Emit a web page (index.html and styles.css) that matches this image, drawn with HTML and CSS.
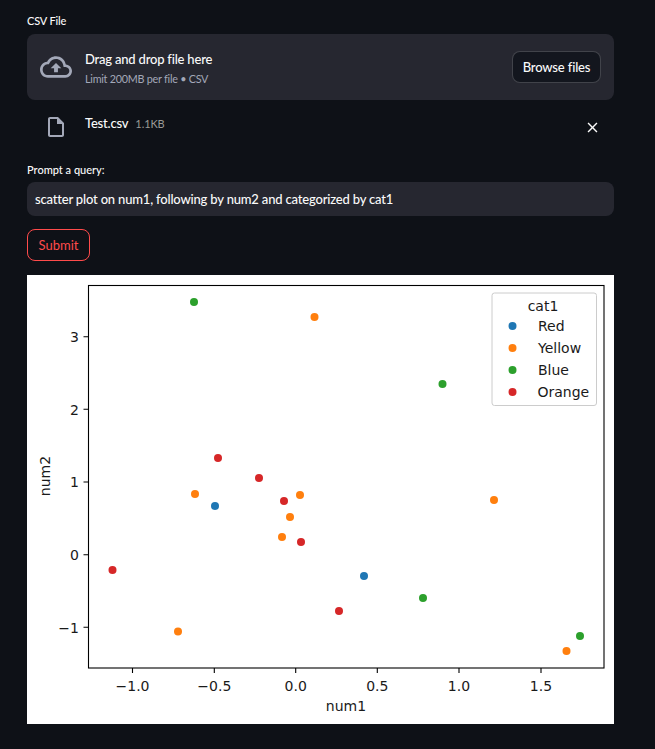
FILE: index.html
```html
<!DOCTYPE html>
<html lang="en">
<head>
<meta charset="utf-8">
<title>CSV query</title>
<link rel="stylesheet" href="styles.css">
</head>
<body>
<main class="app">
  <label class="field-label label-csv">CSV File</label>
  <section class="dropzone">
    <svg class="icon-cloud" viewBox="0 0 24 24"><path d="M19.35 10.04C18.67 6.59 15.64 4 12 4 9.11 4 6.6 5.64 5.35 8.04 2.34 8.36 0 10.91 0 14c0 3.31 2.69 6 6 6h13c2.76 0 5-2.24 5-5 0-2.64-2.05-4.78-4.65-4.96zM19 18H6c-2.21 0-4-1.79-4-4 0-2.05 1.53-3.76 3.56-3.97l1.07-.11.5-.95C8.08 7.14 9.94 6 12 6c2.62 0 4.88 1.86 5.39 4.43l.3 1.5 1.53.11c1.56.1 2.78 1.41 2.78 2.96 0 1.65-1.35 3-3 3zM8 13h2.55v3h2.9v-3H16l-4-4z"/></svg>
    <div class="drop-text">
      <div class="drop-title">Drag and drop file here</div>
      <div class="drop-sub">Limit 200MB per file • CSV</div>
    </div>
    <button class="browse">Browse files</button>
  </section>
  <section class="file-row">
    <svg class="icon-file" viewBox="0 0 24 24"><path d="M14 2H6c-1.1 0-1.99.9-1.99 2L4 20c0 1.1.89 2 1.99 2H18c1.1 0 2-.9 2-2V8l-6-6zM6 20V4h7v5h5v11H6z"/></svg>
    <span class="file-name">Test.csv</span>
    <span class="file-size">1.1KB</span>
    <svg class="icon-close" viewBox="0 0 24 24"><path d="M19 6.41L17.59 5 12 10.59 6.41 5 5 6.41 10.59 12 5 17.59 6.41 19 12 13.41 17.59 19 19 17.59 13.41 12z"/></svg>
  </section>
  <label class="field-label label-query">Prompt a query:</label>
  <div class="query-input">scatter plot on num1, following by num2 and categorized by cat1</div>
  <button class="submit">Submit</button>
  <figure class="plot">
    <svg class="chart" width="587" height="449" viewBox="0 0 587 449">
      <rect class="axes" x="61.5" y="10.5" width="515.5" height="382.5"/>
      <g class="ticks">
        <path d="M105.5 393v5M187.3 393v5M268.7 393v5M350.3 393v5M432 393v5M514 393v5"/>
        <path d="M61.5 61.7h-5M61.5 134.3h-5M61.5 207h-5M61.5 279.7h-5M61.5 352.3h-5"/>
      </g>
      <g class="tick-x">
        <text x="105.5" y="416">−1.0</text>
        <text x="187.3" y="416">−0.5</text>
        <text x="268.7" y="416">0.0</text>
        <text x="350.3" y="416">0.5</text>
        <text x="432" y="416">1.0</text>
        <text x="514" y="416">1.5</text>
      </g>
      <g class="tick-y">
        <text x="52" y="67">3</text>
        <text x="52" y="139.5">2</text>
        <text x="52" y="212">1</text>
        <text x="52" y="285">0</text>
        <text x="52" y="357.5">−1</text>
      </g>
      <text class="axis-label" x="319" y="436">num1</text>
      <text class="axis-label" transform="translate(23 201) rotate(-90)">num2</text>
      <g class="s-green">
        <circle cx="167" cy="27" r="4"/><circle cx="415.500" cy="109" r="4"/><circle cx="396" cy="323" r="4"/><circle cx="553" cy="361" r="4"/>
      </g>
      <g class="s-orange">
        <circle cx="287.500" cy="42" r="4"/><circle cx="168" cy="219" r="4"/><circle cx="273" cy="220" r="4"/><circle cx="467" cy="225" r="4"/><circle cx="263" cy="242" r="4"/><circle cx="255" cy="262" r="4"/><circle cx="151" cy="356.500" r="4"/><circle cx="539.500" cy="376" r="4"/>
      </g>
      <g class="s-red">
        <circle cx="191" cy="183" r="4"/><circle cx="232" cy="203" r="4"/><circle cx="257" cy="226" r="4"/><circle cx="274" cy="267" r="4"/><circle cx="85.500" cy="295" r="4"/><circle cx="312" cy="336" r="4"/>
      </g>
      <g class="s-blue">
        <circle cx="188" cy="231" r="4"/><circle cx="337" cy="301" r="4"/>
      </g>
      <rect class="legend" x="465" y="18" width="104.500" height="112.500" rx="2.500"/>
      <text class="legend-title" x="516" y="35.500">cat1</text>
      <circle class="m-blue" cx="485.500" cy="51" r="4"/>
      <circle class="m-orange" cx="485.500" cy="73" r="4"/>
      <circle class="m-green" cx="485.500" cy="95" r="4"/>
      <circle class="m-red" cx="485.500" cy="117" r="4"/>
      <text class="legend-text" x="511" y="56">Red</text>
      <text class="legend-text" x="511" y="78">Yellow</text>
      <text class="legend-text" x="511" y="100">Blue</text>
      <text class="legend-text" x="510.500" y="122">Orange</text>
    </svg>
  </figure>
</main>
</body>
</html>
```
FILE: styles.css
```css
* { box-sizing: border-box; }
html, body { margin: 0; padding: 0; }
body {
  background: #0e1117;
  color: #fafafa;
  font-family: "Lato", "Noto Sans", sans-serif;
  width: 655px;
  height: 749px;
  overflow: hidden;
}
.app {
  width: 587px;
  margin-left: 27px;
  display: flex;
  flex-direction: column;
  padding-top: 14px;
}
.field-label {
  display: block;
  font-size: 11px;
  line-height: 14px;
  font-weight: 500;
  color: #fafafa;
}
.label-csv { margin-bottom: 6px; letter-spacing: -0.15px; }
.dropzone {
  height: 66px;
  background: #262730;
  border-radius: 8px;
  display: flex;
  align-items: center;
  padding: 0 13px;
}
.icon-cloud { width: 32px; height: 32px; fill: #a3a8b8; flex: none; }
.drop-text { margin-left: 13px; flex: 1; margin-top: 3px; }
.drop-title { font-size: 13px; line-height: 20px; letter-spacing: -0.2px; font-weight: 500; color: #fafafa; }
.drop-sub { font-size: 10.800px; line-height: 20px; letter-spacing: -0.25px; color: #a3a8b8; }
.browse {
  width: 89px;
  height: 32px;
  background: #13161e;
  border: 1px solid rgba(250, 250, 250, 0.2);
  border-radius: 8px;
  color: #fafafa;
  font-family: inherit;
  font-size: 13px;
  font-weight: 500;
  letter-spacing: -0.15px;
  padding: 0;
}
.file-row {
  height: 54px;
  display: flex;
  align-items: center;
  padding-left: 17px;
}
.icon-file { width: 24px; height: 24px; fill: #a3a8b8; flex: none; }
.file-name { margin-left: 17px; font-size: 13px; letter-spacing: -0.2px; font-weight: 500; color: #fafafa; margin-top: -8px; }
.file-size { margin-left: 7px; font-size: 11px; letter-spacing: -0.1px; color: #9a9a96; margin-top: -7px; }
.icon-close { width: 17px; height: 17px; fill: #fafafa; margin-left: auto; margin-right: 13px; flex: none; }
.label-query { margin-top: 9px; margin-bottom: 5px; }
.query-input {
  height: 34px;
  background: #262730;
  border-radius: 8px;
  padding: 0 8px;
  display: flex;
  align-items: center;
  font-size: 13px;
  letter-spacing: -0.18px;
  font-weight: 500;
  color: #fafafa;
}
.submit {
  align-self: flex-start;
  margin-top: 13px;
  width: 63px;
  height: 32px;
  background: #0e1117;
  border: 1px solid #ff4b4b;
  border-radius: 8px;
  color: #ff4b4b;
  font-family: inherit;
  font-size: 13px;
  padding: 0;
}
.plot {
  margin: 14px 0 0;
  width: 587px;
  height: 449px;
  background: #fff;
}
.chart { display: block; font-family: "DejaVu Sans", sans-serif; }
.axes { fill: #fff; stroke: #000; stroke-width: 1.100; }
.ticks path { stroke: #000; stroke-width: 1.100; fill: none; }
.tick-x text { font-size: 14px; text-anchor: middle; fill: #1a1a1a; }
.tick-y text { font-size: 14px; text-anchor: end; fill: #1a1a1a; }
.axis-label { font-size: 14px; text-anchor: middle; fill: #1a1a1a; }
.s-green circle, .m-green { fill: #2ca02c; }
.s-orange circle, .m-orange { fill: #ff7f0e; }
.s-red circle, .m-red { fill: #d62728; }
.s-blue circle, .m-blue { fill: #1f77b4; }
.legend { fill: #fff; fill-opacity: 0.8; stroke: #ccc; stroke-width: 1; }
.legend-title { font-size: 14px; text-anchor: middle; fill: #1a1a1a; }
.legend-text { font-size: 14px; fill: #1a1a1a; }
```
